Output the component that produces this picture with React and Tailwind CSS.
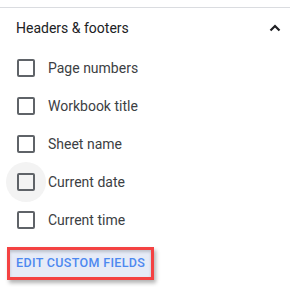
import React from 'react';

const items = [
  { label: 'Page numbers' },
  { label: 'Workbook title' },
  { label: 'Sheet name' },
  { label: 'Current date', hover: true },
  { label: 'Current time' },
];

const Checkbox = ({ hover }) => (
  <div className="relative w-[18px] h-[18px] shrink-0">
    {hover && (
      <div className="absolute left-1/2 top-1/2 -translate-x-1/2 -translate-y-1/2 w-10 h-10 rounded-full bg-[#f3f3f3]" />
    )}
    <div className="relative w-[18px] h-[18px] rounded-[2px] border-2 border-[#5f6368]" />
  </div>
);

export default function App() {
  return (
    <div className="w-[290px] h-[287px] bg-white overflow-hidden font-['Roboto',sans-serif]">
      <div className="pt-[7px]">
        <div className="h-px bg-[#dadce0]" />
      </div>
      <div className="flex items-center justify-between pl-4 pr-[9px] h-[41px]">
        <span className="text-[14px] text-[#202124]">Headers &amp; footers</span>
        <svg width="12" height="8" viewBox="0 0 12 8" className="mt-[-2px]">
          <polyline points="1.5,6.5 6,2 10.5,6.5" fill="none" stroke="#202124" strokeWidth="2.2" />
        </svg>
      </div>
      <div className="flex flex-col">
        {items.map((it) => (
          <div key={it.label} className="flex items-center h-[38px] pl-[17px]">
            <Checkbox hover={it.hover} />
            <span className="ml-[13px] text-[14px] text-[#3c4043]">{it.label}</span>
          </div>
        ))}
      </div>
      <div className="pl-[7px] pt-[8px]">
        <div className="inline-flex items-center h-[33px] px-[6px] border-[3px] border-[#f44242] bg-[#e6ebf7] shadow-[2px_3px_4px_rgba(0,0,0,0.3),inset_0_2px_3px_rgba(0,0,0,0.18)]">
          <span className="text-[12.5px] font-medium tracking-[0.35px] text-[#4d88f0]">EDIT CUSTOM FIELDS</span>
        </div>
      </div>
    </div>
  );
}
